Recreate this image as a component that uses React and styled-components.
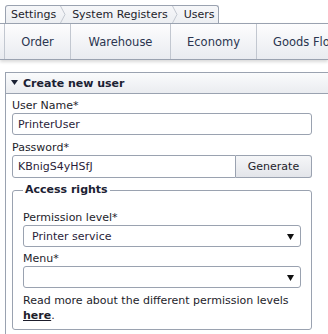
import styled, { createGlobalStyle } from 'styled-components';

const GlobalStyle = createGlobalStyle`
  body {
    margin: 0;
    background: #fff;
    font-family: "DejaVu Sans", Verdana, sans-serif;
    font-size: 11px;
    color: #1d1d2b;
    overflow: hidden;
  }
`;

const Page = styled.div`
  padding-top: 5px;
  width: 328px;
  height: 334px;
  box-sizing: border-box;
`;

const Crumbs = styled.div`
  display: inline-flex;
  align-items: stretch;
  margin-left: 5px;
  height: 17px;
  border: 1px solid #9aa2b0;
  border-bottom: none;
  border-radius: 3px 3px 0 0;
  background: linear-gradient(#f6f7f9, #eceef2);
`;

const Crumb = styled.span`
  display: flex;
  align-items: center;
  padding: 0 ${(p) => (p.last ? '4px' : '4px')} 0 ${(p) => (p.first ? '5px' : '6px')};
  color: #1d1d2b;
`;

const Chevron = () => (
  <svg width="6" height="17" viewBox="0 0 6 17">
    <polyline points="0.5,0 5,8.5 0.5,17" fill="none" stroke="#c3c8d0" strokeWidth="1" />
  </svg>
);

const NavBar = styled.div`
  display: flex;
  height: 35px;
  border-top: 1px solid #9aa2b0;
  border-bottom: 1px solid #9aa2b0;
  background: linear-gradient(#fdfdfe, #e9ebf0);
  box-shadow: 0 2px 3px rgba(0, 0, 0, 0.15);
  overflow: hidden;
  white-space: nowrap;
`;

const NavItem = styled.div`
  display: flex;
  align-items: center;
  flex: 0 0 ${(p) => p.w}px;
  border-right: 1px solid #c2c7d0;
  font-size: 11.5px;
  color: #2b3550;
  box-sizing: border-box;
  padding-left: ${(p) => (p.pad ? '16px' : '0')};
  justify-content: ${(p) => (p.pad ? 'flex-start' : 'center')};
`;

const Panel = styled.div`
  margin: 12px 0 0 5px;
  border-left: 1px solid #9aa2b0;
  height: 262px;
`;

const PanelHeader = styled.div`
  display: flex;
  align-items: center;
  gap: 5px;
  height: 20px;
  padding-left: 5px;
  border-top: 1px solid #9aa2b0;
  border-bottom: 1px solid #9aa2b0;
  background: linear-gradient(#fafbfc, #eaecf0);
  font-weight: bold;
  color: #1b2133;
`;

const PanelBody = styled.div`
  padding: 4px 16px 0 6px;
`;

const Label = styled.div`
  line-height: 15px;
  margin-top: ${(p) => p.mt || 0}px;
`;

const Row = styled.div`
  display: flex;
`;

const Input = styled.div`
  flex: 1;
  box-sizing: border-box;
  display: flex;
  align-items: center;
  padding-left: 5px;
  border: 1px solid #9aa2b0;
  border-radius: ${(p) => (p.joined ? '3px 0 0 3px' : '3px')};
  background: #fff;
  color: #2a1d3a;
  height: ${(p) => p.h || 22}px;
`;

const Button = styled.div`
  width: 76px;
  height: 23px;
  box-sizing: border-box;
  display: flex;
  align-items: center;
  justify-content: center;
  border: 1px solid #9aa2b0;
  border-left: none;
  border-radius: 0 3px 3px 0;
  background: linear-gradient(#f5f6f8, #e3e5ea);
  color: #1d1d2b;
`;

const Fieldset = styled.fieldset`
  margin: 5px 0 0 0;
  padding: 0 10px 6px 10px;
  border: 1px solid #9aa2b0;
  border-radius: 3px;
`;

const Legend = styled.legend`
  padding: 0 2px;
  margin-left: 0;
  font-weight: bold;
  line-height: 14px;
  color: #1b2133;
`;

const Select = styled.div`
  height: 22px;
  box-sizing: border-box;
  display: flex;
  align-items: center;
  justify-content: space-between;
  padding: 0 6px 0 8px;
  border: 1px solid #9aa2b0;
  border-radius: 3px;
  background: #fff;
  color: #2a1d3a;
`;

const Arrow = () => (
  <svg width="7" height="7" viewBox="0 0 7 7">
    <polygon points="0,1 7,1 3.5,7" fill="#111" />
  </svg>
);

const Note = styled.div`
  margin-top: 5px;
  line-height: 15px;

  a {
    color: #1d1d2b;
    font-weight: bold;
    text-decoration: underline;
  }
`;

export default function App() {
  return (
    <Page>
      <GlobalStyle />
      <Crumbs>
        <Crumb first>Settings</Crumb>
        <Chevron />
        <Crumb>System Registers</Crumb>
        <Chevron />
        <Crumb last>Users</Crumb>
      </Crumbs>
      <NavBar>
        <NavItem w={5} />
        <NavItem w={66}>Order</NavItem>
        <NavItem w={100}>Warehouse</NavItem>
        <NavItem w={86}>Economy</NavItem>
        <NavItem w={120} pad>Goods Flow</NavItem>
      </NavBar>
      <Panel>
        <PanelHeader>
          <svg width="7" height="6" viewBox="0 0 7 6">
            <polygon points="0,0 7,0 3.5,5" fill="#1b2133" />
          </svg>
          Create new user
        </PanelHeader>
        <PanelBody>
          <Label>User Name*</Label>
          <Row>
            <Input>PrinterUser</Input>
          </Row>
          <Label mt={5}>Password*</Label>
          <Row>
            <Input joined h={23}>KBnigS4yHSfJ</Input>
            <Button>Generate</Button>
          </Row>
          <Fieldset>
            <Legend>Access rights</Legend>
            <Label mt={13}>Permission level*</Label>
            <Select>
              Printer service
              <Arrow />
            </Select>
            <Label mt={4}>Menu*</Label>
            <Select>
              <span />
              <Arrow />
            </Select>
            <Note>
              Read more about the different permission levels <a>here</a>.
            </Note>
          </Fieldset>
        </PanelBody>
      </Panel>
    </Page>
  );
}
